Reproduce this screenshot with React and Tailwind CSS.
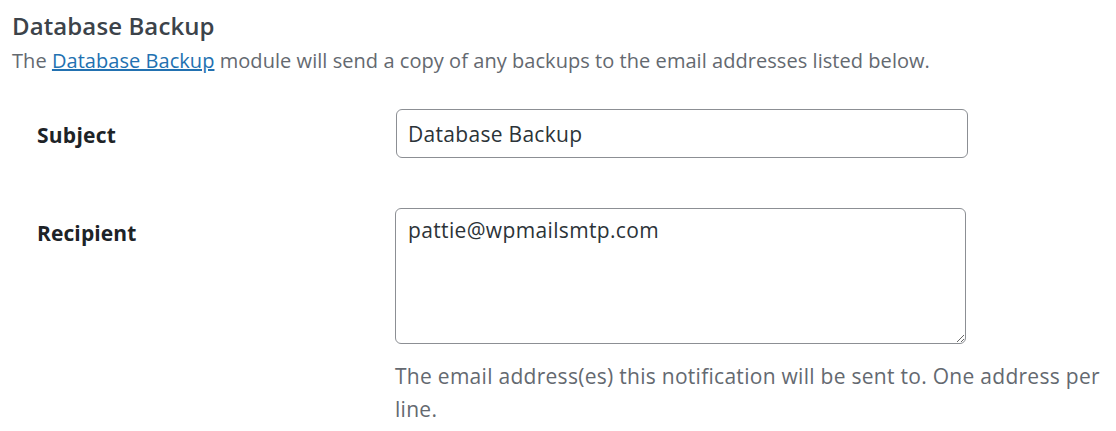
import React from "react";

export default function App() {
  return (
    <div className="w-[1116px] h-[431px] bg-white overflow-hidden pl-[12px] pt-[10px] font-['Open_Sans',sans-serif]">
      <h2 className="text-[24px] leading-[32px] font-semibold text-[#3c434a] tracking-[0.1px]">Database Backup</h2>
      <p className="mt-[5px] text-[20px] leading-[28px] text-[#646970] tracking-[0.05px]">
        The <a href="#" className="text-[#2271b1] underline">Database Backup</a> module will send a copy of any backups to the email addresses listed below.
      </p>
      <div className="mt-[34px] flex flex-col">
        <div className="flex items-start">
          <div className="w-[384px] pl-[25px] pt-[12px] text-[21px] leading-[28px] font-bold text-[#1d2327] tracking-[0.25px]">Subject</div>
          <input
            readOnly
            defaultValue="Database Backup"
            className="w-[572px] h-[49px] border border-[#8c8f94] rounded-[6px] px-[11px] text-[21px] text-[#2c3338] tracking-[0.3px] outline-none"
          />
        </div>
        <div className="flex items-start mt-[50px]">
          <div className="w-[383px] pl-[25px] pt-[11px] text-[21px] leading-[28px] font-bold text-[#1d2327] tracking-[0.1px]">Recipient</div>
          <div className="flex flex-col">
            <textarea
              readOnly
              defaultValue="pattie@wpmailsmtp.com"
              className="w-[571px] h-[136px] border border-[#8c8f94] rounded-[6px] px-[12px] py-[6px] text-[21px] leading-[30px] text-[#2c3338] tracking-[0.35px] outline-none resize-y"
            />
            <p className="mt-[16px] w-[712px] text-[21px] leading-[33px] text-[#646970] tracking-[0.28px]">
              The email address(es) this notification will be sent to. One address per line.
            </p>
          </div>
        </div>
      </div>
    </div>
  );
}
